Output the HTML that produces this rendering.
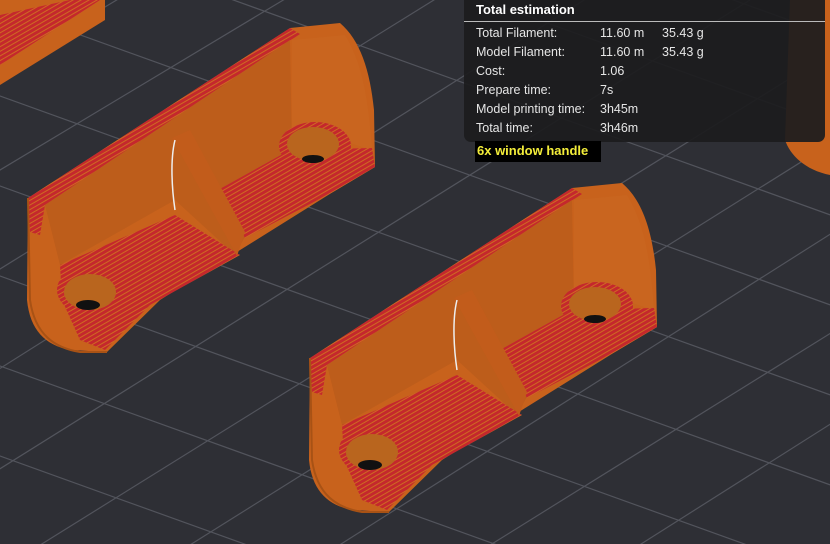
<!DOCTYPE html>
<html><head><meta charset="utf-8"><style>
html,body{margin:0;padding:0;width:830px;height:544px;overflow:hidden;background:#2e2f35;font-family:"Liberation Sans",sans-serif}
svg{position:absolute;left:0;top:0;display:block}
#panel{position:absolute;left:464px;top:0;width:361px;height:142px;background:rgba(28,28,30,0.93);border-radius:0 0 7px 7px;color:#e6e6e6;font-size:12.5px;overflow:hidden}
#panel .h{font-weight:bold;color:#fff;font-size:13px;padding:2px 0 0 12px;height:19px;border-bottom:1px solid #bbb}
.r{position:absolute;left:12px;white-space:nowrap}
.r span{position:absolute}
#lbl{position:absolute;left:475px;top:141px;width:126px;height:21px;background:#000;color:#f4ee3a;font-weight:bold;font-size:13px;line-height:20px;padding-left:2px;box-sizing:border-box}
</style></head><body>
<svg width="830" height="544" viewBox="0 0 830 544">
<defs>
<pattern id="st" width="4" height="4" patternUnits="userSpaceOnUse" patternTransform="rotate(-30)">
 <rect width="4" height="4" fill="#c4282c"/><rect width="4" height="1" fill="#cf6a22"/>
</pattern>
<g id="obj">
 <path d="M28,198 L290,28 L340,23 C360,40 370,70 374,110 L375,167 L333,192 L160,300 L107,352 L70,350 C45,345 30,330 27,300 Z" fill="#c8621c"/>
 <path d="M28,198 L290,28 L300,34 L45,205 L40,235 L30,232 Z" fill="url(#st)"/>
 <path d="M45,205 L290,40 L292,150 L235,255 L175,200 L60,265 Z" fill="#bd5d1b"/>
 <path d="M292,40 L345,35 C360,60 368,90 372,150 L340,140 L292,150 Z" fill="#c9651f"/>
 <path d="M60,265 L175,215 L240,255 L150,305 L105,350 L80,340 L62,300 Z" fill="url(#st)"/>
 <path d="M218,190 L290,150 L372,148 L375,167 L333,192 L245,238 Z" fill="url(#st)"/>
 <path d="M172,138 L190,130 L245,232 L237,256 Z" fill="#c25c1b"/>
 <ellipse cx="95" cy="290" rx="38" ry="26" fill="url(#st)"/>
 <ellipse cx="90" cy="292" rx="26" ry="18" fill="#b9651e"/>
 <ellipse cx="88" cy="305" rx="12" ry="5" fill="#111"/>
 <ellipse cx="315" cy="146" rx="36" ry="24" fill="url(#st)"/>
 <ellipse cx="313" cy="144" rx="26" ry="17" fill="#b9651e"/>
 <ellipse cx="313" cy="159" rx="11" ry="4" fill="#111"/>
 <path d="M28,198 L30,300 C35,335 55,348 80,352 L107,352" fill="none" stroke="#a85215" stroke-width="2"/>
 <path d="M175,140 C170,160 172,190 175,210" stroke="#eee" stroke-width="1.5" fill="none"/>
</g>
</defs>
<g stroke="#52545c" stroke-width="1.2">
 <line x1="-100" y1="60" x2="900" y2="420"/><line x1="-100" y1="150" x2="900" y2="510"/><line x1="-100" y1="240" x2="900" y2="600"/><line x1="-100" y1="330" x2="900" y2="690"/><line x1="-100" y1="420" x2="900" y2="780"/><line x1="-100" y1="-30" x2="900" y2="330"/><line x1="-100" y1="-120" x2="900" y2="240"/><line x1="-100" y1="-210" x2="900" y2="150"/><line x1="-100" y1="-300" x2="900" y2="60"/>
 <line x1="-50" y1="300" x2="450" y2="-10"/><line x1="-50" y1="400" x2="600" y2="-10"/><line x1="-50" y1="500" x2="750" y2="0"/><line x1="0" y1="570" x2="900" y2="10"/><line x1="150" y1="570" x2="900" y2="100"/><line x1="300" y1="570" x2="900" y2="190"/><line x1="450" y1="570" x2="900" y2="290"/><line x1="600" y1="570" x2="900" y2="380"/><line x1="-50" y1="200" x2="300" y2="-10"/><line x1="-50" y1="100" x2="150" y2="-20"/>
</g>
<path d="M0,0 L105,0 L105,20 L0,85 Z" fill="#c8621c"/>
<path d="M0,15 L70,0 L100,0 L0,65 Z" fill="url(#st)"/>
<path d="M790,0 L830,0 L830,175 C805,170 790,155 785,140 Z" fill="#c8621c"/>
<use href="#obj"/>
<use href="#obj" transform="translate(282,160)"/>
</svg>
<div id="panel">
 <div class="h">Total estimation</div>
 <div class="r" style="top:26px">Total Filament:<span style="left:124px">11.60 m</span><span style="left:186px">35.43 g</span></div>
 <div class="r" style="top:45px">Model Filament:<span style="left:124px">11.60 m</span><span style="left:186px">35.43 g</span></div>
 <div class="r" style="top:64px">Cost:<span style="left:124px">1.06</span></div>
 <div class="r" style="top:83px">Prepare time:<span style="left:124px">7s</span></div>
 <div class="r" style="top:102px">Model printing time:<span style="left:124px">3h45m</span></div>
 <div class="r" style="top:121px">Total time:<span style="left:124px">3h46m</span></div>
</div>
<div id="lbl">6x window handle</div>
</body></html>
